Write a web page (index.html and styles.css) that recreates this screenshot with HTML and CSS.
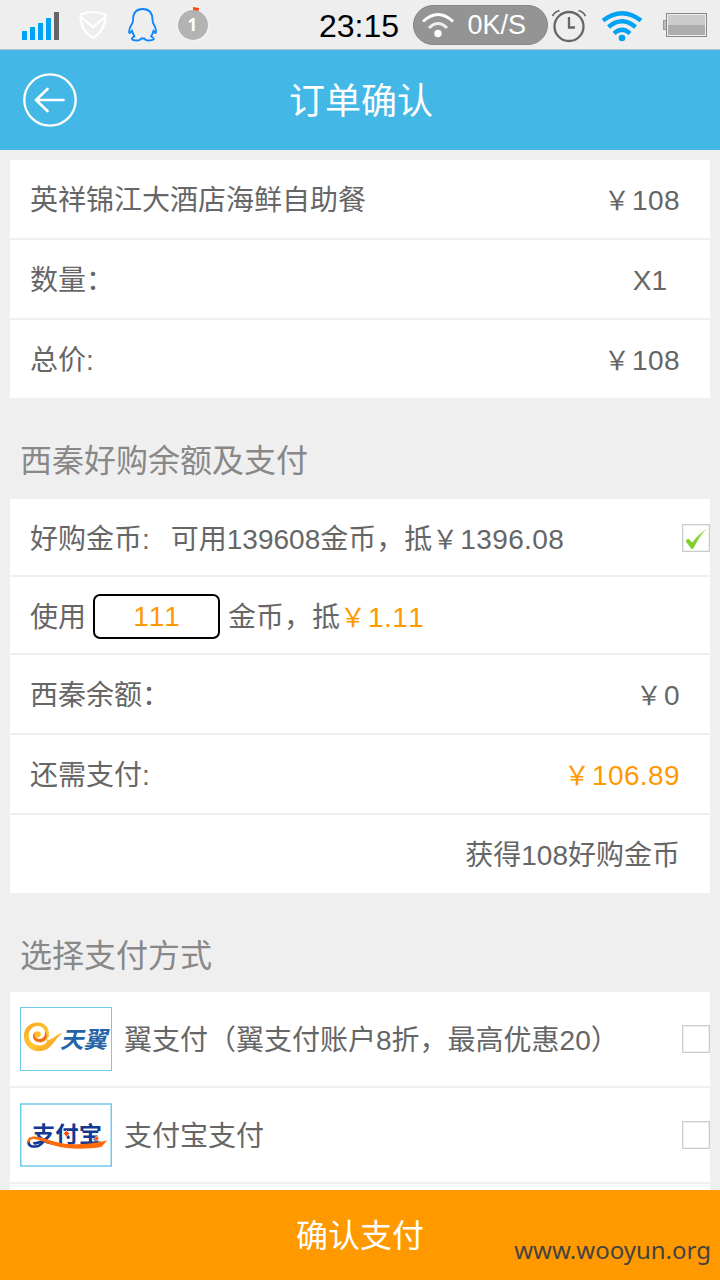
FILE: index.html
```html
<!DOCTYPE html>
<html lang="zh-CN">
<head>
<meta charset="utf-8">
<title>订单确认</title>
<link rel="stylesheet" href="styles.css">
</head>
<body>
<div class="status">
  <svg class="status-left" width="220" height="49" viewBox="0 0 220 49">
    <g fill="#00a2f2"><rect x="22" y="31" width="5" height="9"/><rect x="30" y="27" width="5" height="13"/><rect x="38" y="23" width="5" height="17"/><rect x="46" y="18" width="5" height="22"/></g>
    <rect x="54" y="12" width="5" height="28" fill="#666"/>
    <g fill="none" stroke="#fff" stroke-width="2.2" stroke-linejoin="round"><path d="M80.500 14.500Q93 9.500 105.500 14.500Q106 30 93 38Q80 30 80.500 14.500Z"/><path d="M81 17L93 27L105 17"/></g>
    <path d="M133 20C133 12.500 137 9 142.700 9C148.500 9 152.500 12.500 152.500 20L153 23C155.500 27 156.500 29.500 156 32.500C155.500 34 154.500 32 153.500 30.500C153 33 152.500 34.500 151 36.500C154 37.500 155 39.500 152 40C148.500 41 145 40.500 144.500 38.500H141C140.500 40.500 137 41 133.500 40C131 39.500 131.500 37.500 134.500 36.500C133 34.500 132.500 33 132 30.500C130.500 32.500 129.500 34 129.200 32.500C128.700 29.500 130 27 132.500 23Z" fill="none" stroke="#0f86ff" stroke-width="1.800" stroke-linejoin="round"/>
    <circle cx="193" cy="25" r="16" fill="#f6f6f6"/><circle cx="193" cy="25" r="15" fill="#b3b3b3"/>
    <path d="M193 7L199 8L198.500 11L193 10Z" fill="#ff4510"/>
    <text x="192.300" y="30.500" class="badge-number">1</text>
  </svg>
  <div class="status-right">
    <span class="clock">23:15</span>
    <div class="speed">
      <svg width="34" height="26" viewBox="0 0 34 26" fill="none" stroke="#fff" stroke-width="3"><path d="M2 9.500Q17 -4.500 32 9.500"/><path d="M8 16Q17 7 26 16" stroke="#eee"/><circle cx="17" cy="21.500" r="3.700" fill="#fff" stroke="none"/></svg>
      <span>0K/S</span>
    </div>
    <svg class="status-icons" width="172" height="49" viewBox="0 0 172 49">
      <g fill="none" stroke="#666" stroke-width="2.300"><circle cx="21" cy="26.500" r="14.500"/><path d="M21 17V27.500H27"/><path d="M4.500 16Q6.500 12 11.500 10.500M30.500 10.500Q35.500 12 37.500 16" stroke-width="1.800"/></g>
      <g fill="none" stroke="#00a2f2" stroke-width="4.300"><path d="M55 20.500Q74 6 93 20.500"/><path d="M60.500 27Q74 15.500 87.500 27"/><path d="M66 33.500Q74 26 82 33.500"/></g><circle cx="74" cy="38" r="3.300" fill="#00a2f2"/>
      <rect x="115.500" y="20.500" width="4" height="9" fill="#bbb" stroke="#999"/><rect x="118.500" y="13.500" width="40" height="23" fill="#eee" stroke="#888"/><rect x="120" y="15" width="37" height="10" fill="#ccc"/><rect x="120" y="25" width="37" height="10" fill="#adadad"/>
    </svg>
  </div>
</div>
<header class="header">
  <svg class="back" width="56" height="56" viewBox="0 0 56 56" fill="none" stroke="#fff" stroke-linecap="round"><circle cx="28" cy="28" r="25.700" stroke-width="2.300"/><path d="M41.500 28H14.500M25.500 17L14 28L25.500 39" stroke-width="2.700" stroke-linejoin="round"/></svg>
  <h1 class="title">订单确认</h1>
</header>
<main class="content">
  <section class="card">
    <div class="row"><span>英祥锦江大酒店海鲜自助餐</span><span><span class="yen">￥</span><span class="num">108</span></span></div>
    <div class="row"><span>数量：</span><span class="quantity">X1</span></div>
    <div class="row"><span>总价:</span><span><span class="yen">￥</span><span class="num">108</span></span></div>
  </section>
  <h2 class="heading">西秦好购余额及支付</h2>
  <section class="card">
    <div class="row row-short row-check"><span>好购金币:<span class="available">可用139608金币，抵<span class="yen">￥</span><span class="num">1396.08</span></span></span>
      <svg class="box" width="28" height="28" viewBox="0 0 28 28"><defs><linearGradient id="tick" x1="0" x2="1" y1="1" y2="0"><stop offset=".4" stop-color="#80d02b"/><stop offset="1" stop-color="#b8e982"/></linearGradient></defs><rect x=".5" y=".5" width="27" height="27" fill="#fff" stroke="#ccc"/><rect x="1.500" y="1.500" width="25" height="25" fill="none" stroke="#eee"/><path d="M3.500 17L6 14.500L10.500 18.500Q16 10 25 4.500Q17 13 11 25H9.500Z" fill="url(#tick)"/></svg>
    </div>
    <div class="row row-short row-coins"><span>使用</span><span class="coin-input">111</span><span>金币，抵<span class="accent"><span class="yen">￥</span><span class="num">1.11</span></span></span></div>
    <div class="row"><span>西秦余额：</span><span><span class="yen">￥</span><span class="num">0</span></span></div>
    <div class="row"><span>还需支付:</span><span class="accent"><span class="yen">￥</span><span class="num">106.89</span></span></div>
    <div class="row row-end"><span>获得108好购金币</span></div>
  </section>
  <h2 class="heading">选择支付方式</h2>
  <section class="card">
    <div class="row row-pay">
      <svg class="logo" width="92" height="64" viewBox="0 0 92 64">
        <defs><linearGradient id="wing" x1="0" y1="0" x2="1" y2="1"><stop stop-color="#ffa01e"/><stop offset=".5" stop-color="#ffc935"/><stop offset="1" stop-color="#f78a14"/></linearGradient></defs>
        <rect x=".5" y=".5" width="91" height="63" fill="#fff" stroke="#6fcbea"/>
        <path d="M29 27C29 19 23 15 17 15.500C8 16 3 23 4 31C5 40 13 45 21 44C31 43 33 34 42.500 26C36 27 33 33 27 33C27 38 20 40 14 37C8 34 7 26 11 22C15 17 24 18 25 25C26 31 20 34 16 31C21 31 22 27 20 25C17 23 13 25 13 29C13 34 18 36 22 35C27 34 29 31 29 27Z" fill="url(#wing)"/>
        <path d="M13 29C13 33 17 36 22 35C27 33 28 28 25 24C26 30 21 34 16 31C14.500 30 14 27 15 25.500Q13 27 13 29Z" fill="#ed6f1c"/>
        <text x="40" y="41" textLength="47" lengthAdjust="spacingAndGlyphs" class="logo-wing">天翼</text>
      </svg>
      <span class="pay-name">翼支付（翼支付账户8折，最高优惠20）</span><span class="box box-empty"></span>
    </div>
    <div class="row row-pay">
      <svg class="logo" width="92" height="64" viewBox="0 0 92 64">
        <rect x=".75" y="1" width="90.500" height="62" fill="#fff" stroke="#6fcbea" stroke-width="1.500"/>
        <text x="12" y="38.500" textLength="70" lengthAdjust="spacingAndGlyphs" class="logo-ali">支付宝</text>
        <path d="M8.500 38C8 43 12 44 16 43.500C20 43 23 40 25 36" fill="none" stroke="#123a92" stroke-width="2.500"/>
        <path d="M7 39.500C7 35 11 33 15 33.500C22 34 27 36.500 34 38.500C52 43.500 70 41 87 37.500L81.500 44C66 46.500 48 46.500 34 42.500C26 40 18 36 14 36C11 36 9 37.500 8.500 40Z" fill="#ff6b09"/>
        <path d="M43.300 30.500L46.500 27.300L49.700 30.500L46.500 33.700ZM74 35.500L76.500 33L79 35.500L76.500 38Z" fill="#ff4b19" stroke="#fff" stroke-width=".6"/>
      </svg>
      <span class="pay-name">支付宝支付</span><span class="box box-empty"></span>
    </div>
    <div class="row row-pay"></div>
  </section>
</main>
<footer class="footer"><span class="confirm">确认支付</span><span class="watermark">www.wooyun.org</span></footer>
</body>
</html>
```
FILE: styles.css
```css
* { box-sizing: border-box; }
body {
  margin: 0;
  width: 720px;
  height: 1280px;
  display: flex;
  flex-direction: column;
  overflow: hidden;
  background: #efefef;
  color: #666;
  font-family: "Liberation Sans", "Noto Sans CJK SC", sans-serif;
  font-size: 28px;
  font-kerning: none;
  line-height: 40px;
}
svg { display: block; flex: none; }
.status { height: 50px; flex: none; display: flex; justify-content: space-between; border-bottom: 1px solid #b5c5c9; background: #eee; }
.status-right { display: flex; align-items: center; }
.clock { color: #000; font-size: 32px; padding-top: 3px; margin-right: 14px; }
.speed { width: 135px; height: 40px; padding: 0 21px 0 7px; display: flex; align-items: center; justify-content: space-between; border: 1px solid #858585; border-radius: 20px; background: #949494; color: #fff; font-size: 27px; }
.badge-number { font: bold 17px "Noto Sans", sans-serif; fill: #fff; text-anchor: middle; }
.header { height: 100px; flex: none; display: grid; grid-template-columns: 78px 1fr 78px; align-items: center; background: #43b7e5; color: #fff; }
.back { margin-left: 22px; }
.title { margin: 0; padding: 4px 0 0 2px; text-align: center; font-size: 36px; font-weight: 400; line-height: 50px; }
.content { flex: 1; min-height: 0; overflow: hidden; padding: 10px 10px 0; }
.card { display: flex; flex-direction: column; gap: 2px; }
.row { height: 78px; flex: none; padding: 4px 30px 0 20px; display: flex; align-items: center; justify-content: space-between; background: #fff; white-space: nowrap; }
.row-short { height: 76px; }
.row-check { padding-top: 6px; padding-right: 0; }
.row-end { justify-content: flex-end; }
.row-coins { justify-content: flex-start; padding-top: 6px; }
.quantity { margin-right: 13px; }
.available { margin-left: 21px; }
.yen { display: inline-block; width: 28px; padding-right: 2px; font-size: 26px; line-height: 30px; text-align: center; }
.num { letter-spacing: .4px; }
.coin-input { width: 127px; height: 45px; margin: -3px 8px 0 7px; border: 2px solid #000; border-radius: 7px; color: #f90; text-align: center; line-height: 42px; }
.accent { color: #f90; }
.heading { margin: 0; height: 101px; padding: 40px 10px 0; color: #888; font-size: 32px; font-weight: 400; line-height: 46px; }
.card + .heading:nth-of-type(2) { height: 99px; }
.row-pay { height: 94px; padding: 0 0 0 10px; justify-content: flex-start; }
.pay-name { margin-left: 12px; padding-top: 4px; }
.box { width: 28px; height: 28px; margin-left: auto; }
.row-check .box { margin-top: -4px; }
.box-empty { border: 1px solid #ccc; background: #fff; box-shadow: inset 0 0 0 1px #eee; }
.logo-wing { font: italic bold 23px "Noto Sans CJK SC", sans-serif; fill: #2463a5; }
.logo-ali { font: bold 22px "Noto Sans CJK SC", sans-serif; fill: #123a92; }
.footer { height: 90px; flex: none; position: relative; display: flex; align-items: center; justify-content: center; background: #f90; color: #fff; font-size: 32px; }
.confirm { padding-top: 2px; }
.watermark { position: absolute; right: 9px; bottom: 10px; color: #444; font: 24px/40px "Noto Sans", sans-serif; }
```
